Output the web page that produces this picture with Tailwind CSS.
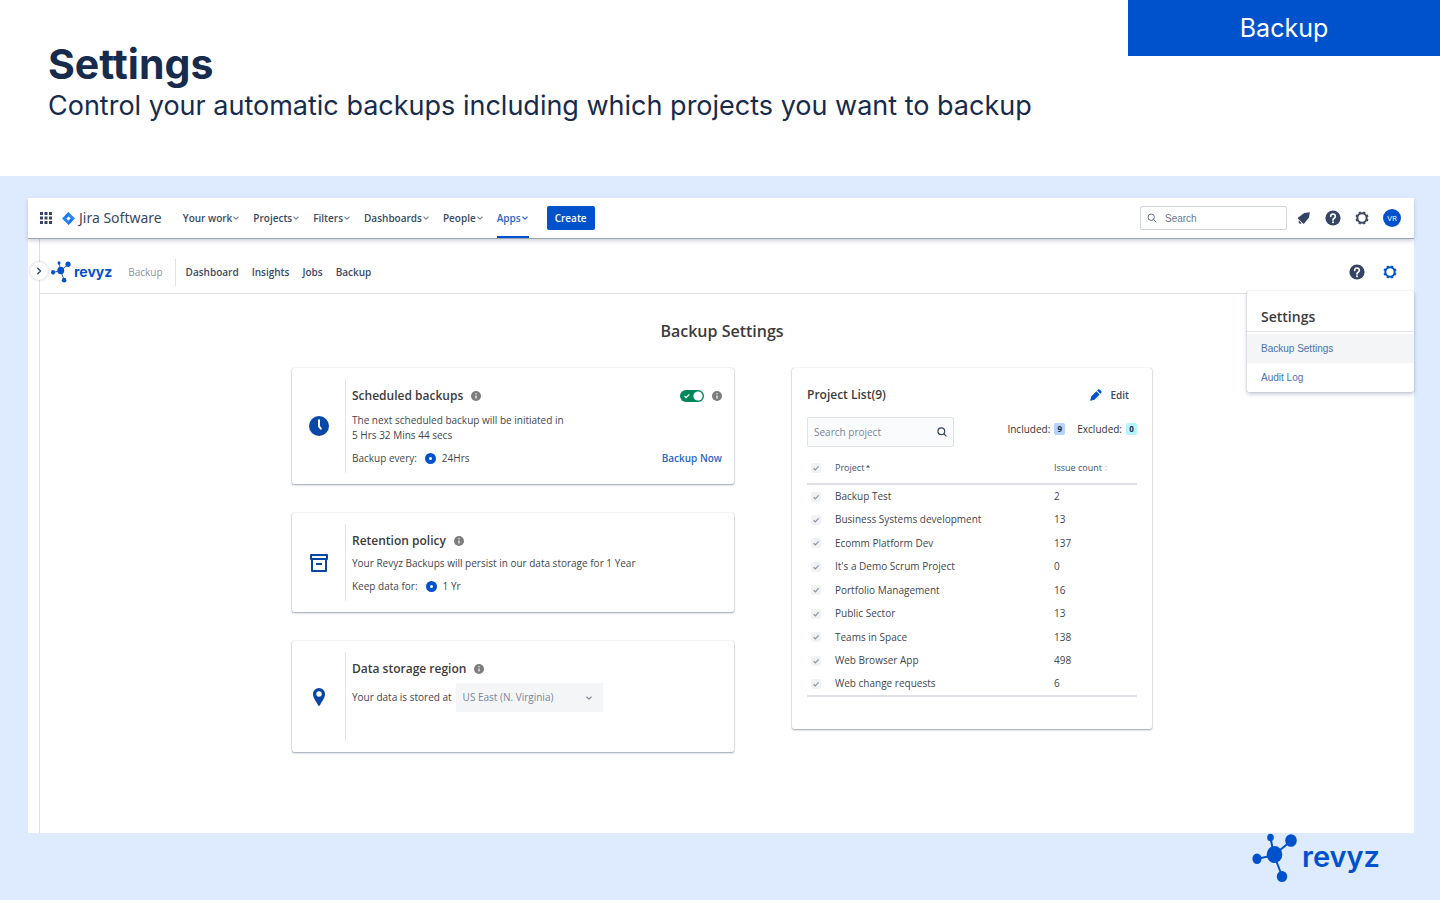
<!DOCTYPE html>
<html lang="en">
<head>
    <meta charset="UTF-8">
    <meta name="viewport" content="width=device-width, initial-scale=1.0">
    <title>Revyz - Backup Settings</title>
    <script src="https://cdn.jsdelivr.net/npm/@tailwindcss/browser@4"></script>
</head>
<body class="min-h-screen flex flex-col bg-white font-['Open_Sans',sans-serif] text-[10px] text-[#42464d]">
    <!-- Icons used more than once -->
    <svg class="hidden" aria-hidden="true">
        <symbol id="chevron" viewBox="0 0 8 8"><path d="M1.800 3 4 5.200l2.200-2.200" fill="none" stroke="currentColor" stroke-width="1.1" stroke-linecap="round" stroke-linejoin="round"/></symbol>
        <symbol id="info" viewBox="0 0 10 10"><circle cx="5" cy="5" r="5" fill="#7d7d7d"/><path d="M5 4.400v3" stroke="#fff" stroke-width="1.200"/><circle cx="5" cy="2.800" r=".7" fill="#fff"/></symbol>
        <symbol id="help" viewBox="0 0 16 16"><circle cx="8" cy="8" r="7.600" fill="#344563"/><path d="M5.700 6.300a2.300 2.300 0 1 1 3.500 2C8.300 8.800 8 9.200 8 10" fill="none" stroke="#fff" stroke-width="1.700" stroke-linecap="round"/><circle cx="8" cy="12.200" r="1" fill="#fff"/></symbol>
        <symbol id="gear" viewBox="0 0 16 16"><circle cx="8" cy="8" r="5.300" fill="none" stroke="currentColor" stroke-width="2.300"/><path d="M13 10.100l2 .8M10.100 13l.8 2M5.900 13l-.8 2M3 10.100l-2 .8M3 5.900l-2-.8M5.900 3l-.8-2M10.100 3l.8-2M13 5.900l2-.8" stroke="currentColor" stroke-width="2.600"/></symbol>
        <symbol id="molecule" viewBox="0 0 46 50"><path d="M22 22 18.500 5M22 22 39 8M22 22 5 26M22 22 30 43" stroke="#0052cc" stroke-width="2"/><g fill="#0052cc"><ellipse cx="22.500" cy="21.500" rx="7.800" ry="8.500"/><ellipse cx="18.500" cy="4.500" rx="3.300" ry="3.800"/><ellipse cx="39" cy="7.500" rx="5.800" ry="6.300"/><ellipse cx="5" cy="25.800" rx="4.600" ry="5.200"/><ellipse cx="30" cy="43.500" rx="5.200" ry="5.500"/></g></symbol>
        <symbol id="tick" viewBox="0 0 10 10"><path d="M2.600 5.200 4.300 6.800 7.600 3.400" fill="none" stroke="currentColor" stroke-width="1.200"/></symbol>
    </svg>

    <!-- Slide header -->
    <header class="h-44 shrink-0 flex justify-between items-start pl-12 text-[#172b4d] font-['Inter',sans-serif]">
        <div class="pt-10">
            <h1 class="text-[41px] leading-12 font-bold">Settings</h1>
            <p class="text-[27px] leading-9">Control your automatic backups including which projects you want to backup</p>
        </div>
        <div class="w-78 h-14 flex items-center justify-center bg-[#0052cc] text-white text-[25px] leading-9">Backup</div>
    </header>

    <section class="grow flex flex-col bg-[#deebff] pt-[22px] pl-7 pr-[26px]">
        <div class="grow flex flex-col bg-white">
            <!-- Jira top bar -->
            <header class="relative z-10 h-[41px] flex items-center pl-3 pr-[13px] bg-white border-b border-[#97a3b9] shadow-[0_2px_4px_rgba(9,30,66,0.2)] text-[#3b4963]">
                <button type="button" aria-label="Switch to">
                    <svg class="size-3" viewBox="0 0 12 12" fill="#344563"><path d="M0 0h3v3H0zM4.500 0h3v3h-3zM9 0h3v3H9zM0 4.500h3v3H0zM4.500 4.500h3v3h-3zM9 4.500h3v3H9zM0 9h3v3H0zM4.500 9h3v3h-3zM9 9h3v3H9z"/></svg>
                </button>
                <a href="#" class="ml-2.5 flex items-center gap-1 text-[14px] leading-5 font-['Noto_Sans',sans-serif]">
                    <svg class="size-[13px]" viewBox="0 0 14 14"><path d="M7 0l7 7-7 7-7-7z" fill="#2684ff"/><path d="M7 4.600 9.400 7 7 9.400 4.600 7z" fill="#fff"/><path d="M7 0v4.600L4.600 7 3 5.400C3 3 5 2 7 0zM7 14V9.400L9.400 7 11 8.600C11 11 9 12 7 14z" fill="#1868db" opacity=".5"/></svg>
                    Jira Software
                </a>
                <nav class="h-full ml-[21px] flex items-center gap-[13px] font-semibold">
                    <a href="#" class="flex items-center">Your work<svg class="size-2 text-[#7a869a]"><use href="#chevron"/></svg></a>
                    <a href="#" class="flex items-center">Projects<svg class="size-2 text-[#7a869a]"><use href="#chevron"/></svg></a>
                    <a href="#" class="flex items-center">Filters<svg class="size-2 text-[#7a869a]"><use href="#chevron"/></svg></a>
                    <a href="#" class="flex items-center">Dashboards<svg class="size-2 text-[#7a869a]"><use href="#chevron"/></svg></a>
                    <a href="#" class="flex items-center">People<svg class="size-2 text-[#7a869a]"><use href="#chevron"/></svg></a>
                    <a href="#" class="h-full flex items-center border-y-2 border-t-transparent border-b-[#0052cc] text-[#2a66c8]">Apps<svg class="size-2"><use href="#chevron"/></svg></a>
                </nav>
                <button type="button" class="ml-[18px] w-12 h-6 rounded-xs bg-[#0052cc] text-white font-semibold">Create</button>
                <label class="ml-auto w-[147px] h-6 flex items-center gap-2 px-1.5 border border-[#cfd3da] rounded-xs font-['Liberation_Sans',sans-serif]">
                    <svg class="size-2.5 shrink-0" viewBox="0 0 10 10" fill="none" stroke="#5e6c84"><circle cx="4.200" cy="4.200" r="3.200"/><path d="m6.600 6.600 2.700 2.700"/></svg>
                    <input type="search" placeholder="Search" aria-label="Search" class="min-w-0 w-full text-[10px] outline-none placeholder:text-[#6b778c]">
                </label>
                <div class="ml-2.5 flex items-center gap-3.5">
                    <button type="button" aria-label="Notifications"><svg class="size-3.5" viewBox="0 0 14 14" fill="#344563"><path d="M12.800 1.300 7.200 2 1.200 6.600q-.8.700.1 1.300l4.800 4.600q.8.600 1.300-.2L12 6.600z"/><path d="M1.800 9.500 4.600 12.200q-1.300 1-2.500.1-.9-1-.3-2.800z"/></svg></button>
                    <button type="button" aria-label="Help"><svg class="size-4"><use href="#help"/></svg></button>
                    <button type="button" aria-label="Settings"><svg class="size-3.5"><use href="#gear"/></svg></button>
                    <button type="button" class="size-[18px] rounded-full bg-[#0052cc] text-white text-[8px] leading-none">VR</button>
                </div>
            </header>

            <div class="relative grow flex">
                <!-- Collapsed sidebar -->
                <div class="w-3 shrink-0 border-r border-[#dcdfe4]"></div>
                <button type="button" aria-label="Expand sidebar" class="absolute z-10 left-0.5 top-[23px] size-[18px] flex items-center justify-center rounded-full bg-white shadow-[0_0_3px_rgba(9,30,66,0.25)] text-[#344563]">
                    <svg class="size-2.5 -rotate-90"><use href="#chevron"/></svg>
                </button>

                <div class="grow min-w-0">
                    <!-- Revyz app bar -->
                    <header class="h-[55px] flex items-center pt-3 pl-2.5 pr-[17px] border-b border-[#dfe1e6] text-[#3b4963] font-semibold">
                        <a href="#" class="flex items-center gap-0.5 text-[14px] leading-5 text-[#0052cc] font-['Inter',sans-serif] font-bold">
                            <svg class="w-[22px] h-[22px]"><use href="#molecule"/></svg>revyz
                        </a>
                        <span class="ml-4 pr-3 h-[27px] flex items-center border-r border-[#dfe1e6] font-normal text-[#8993a4]">Backup</span>
                        <nav class="ml-2.5 flex gap-[13px]">
                            <a href="#">Dashboard</a>
                            <a href="#">Insights</a>
                            <a href="#">Jobs</a>
                            <a href="#">Backup</a>
                        </nav>
                        <div class="ml-auto flex items-center gap-[18px]">
                            <button type="button" aria-label="Help"><svg class="size-4"><use href="#help"/></svg></button>
                            <button type="button" aria-label="Settings" class="text-[#0052cc]"><svg class="size-3.5"><use href="#gear"/></svg></button>
                        </div>
                    </header>

                    <main class="pt-[25px] pr-2.5">
                        <h2 class="text-center text-[16px] leading-6 font-semibold text-[#3c3c3c]">Backup Settings</h2>
                        <div class="mx-auto mt-[25px] w-full max-w-[860px] grid grid-cols-[442fr_360fr] gap-x-[58px] items-start">
                            <div class="flex flex-col gap-[29px]">
                                <!-- Scheduled backups -->
                                <section class="flex py-[11px] rounded-xs bg-white shadow-[0_1px_2px_rgba(9,30,66,0.4),0_0_1px_rgba(9,30,66,0.3)]">
                                    <div class="w-[54px] shrink-0 flex items-center justify-center border-r border-[#e4e6ea]">
                                        <svg class="size-5" viewBox="0 0 20 20"><circle cx="10" cy="10" r="10" fill="#0747a6"/><path d="M10 4.200v6.300l1.800 2.200" fill="none" stroke="#fff" stroke-width="2" stroke-linecap="round"/></svg>
                                    </div>
                                    <div class="grow pl-1.5 pr-3 py-[7px]">
                                        <div class="flex items-center h-5">
                                            <h3 class="text-[12px] leading-5 font-semibold text-[#3c3c3c]">Scheduled backups</h3>
                                            <svg class="ml-2 size-2.5"><use href="#info"/></svg>
                                            <label class="ml-auto grid items-center">
                                                <input type="checkbox" checked aria-label="Scheduled backups" class="col-start-1 row-start-1 appearance-none w-6 h-3 rounded-full bg-[#00875a]">
                                                <svg class="col-start-1 row-start-1 w-6 h-3 pointer-events-none" viewBox="0 0 24 12"><circle cx="18" cy="6" r="4.600" fill="#fff"/><path d="M4.500 6 6.200 7.600 9.300 4.400" fill="none" stroke="#fff" stroke-width="1.300"/></svg>
                                            </label>
                                            <svg class="ml-2 size-2.5"><use href="#info"/></svg>
                                        </div>
                                        <p class="mt-[7px] leading-[15px]">The next scheduled backup will be initiated in<br>5 Hrs 32 Mins 44 secs</p>
                                        <div class="mt-[7px] flex items-center h-4">
                                            <span>Backup every:</span>
                                            <label class="ml-2 flex items-center gap-1.5"><input type="radio" name="every" checked class="appearance-none size-[11px] rounded-full border-4 border-[#0052cc] bg-white">24Hrs</label>
                                            <button type="button" class="ml-auto font-semibold text-[#2a66c8]">Backup Now</button>
                                        </div>
                                    </div>
                                </section>

                                <!-- Retention policy -->
                                <section class="flex py-[11px] rounded-xs bg-white shadow-[0_1px_2px_rgba(9,30,66,0.4),0_0_1px_rgba(9,30,66,0.3)]">
                                    <div class="w-[54px] shrink-0 flex items-center justify-center border-r border-[#e4e6ea]">
                                        <svg class="size-[18px]" viewBox="0 0 18 18" fill="none" stroke="#0747a6" stroke-width="2" stroke-linejoin="round"><path d="M1 1h16v4H1zM2 5v12h14V5M6 10h6"/></svg>
                                    </div>
                                    <div class="grow pl-1.5 pr-3 py-[7px]">
                                        <div class="flex items-center h-5">
                                            <h3 class="text-[12px] leading-5 font-semibold text-[#3c3c3c]">Retention policy</h3>
                                            <svg class="ml-2 size-2.5"><use href="#info"/></svg>
                                        </div>
                                        <p class="mt-[5px] leading-[15px]">Your Revyz Backups will persist in our data storage for 1 Year</p>
                                        <div class="mt-[7px] flex items-center h-4">
                                            <span>Keep data for:</span>
                                            <label class="ml-2 flex items-center gap-1.5"><input type="radio" name="keep" checked class="appearance-none size-[11px] rounded-full border-4 border-[#0052cc] bg-white">1 Yr</label>
                                        </div>
                                    </div>
                                </section>

                                <!-- Data storage region -->
                                <section class="flex py-[11px] rounded-xs bg-white shadow-[0_1px_2px_rgba(9,30,66,0.4),0_0_1px_rgba(9,30,66,0.3)]">
                                    <div class="w-[54px] shrink-0 flex items-center justify-center border-r border-[#e4e6ea]">
                                        <svg class="w-3 h-[18px]" viewBox="0 0 12 18" fill="#0747a6" fill-rule="evenodd"><path d="M6 0a6 6 0 0 1 6 6.200C12 10 8.500 13.500 7 17.200q-1 1.300-2 0C3.500 13.500 0 10 0 6.200A6 6 0 0 1 6 0zm0 3.300a2.700 2.700 0 1 0 0 5.400 2.700 2.700 0 0 0 0-5.400z"/></svg>
                                    </div>
                                    <div class="grow pl-1.5 pr-3 pt-[7px] pb-[29px]">
                                        <div class="flex items-center h-5">
                                            <h3 class="text-[12px] leading-5 font-semibold text-[#3c3c3c]">Data storage region</h3>
                                            <svg class="ml-2 size-2.5"><use href="#info"/></svg>
                                        </div>
                                        <div class="mt-1 flex items-center gap-1">
                                            <label for="region">Your data is stored at</label>
                                            <div class="grid items-center">
                                                <select id="region" disabled class="col-start-1 row-start-1 appearance-none w-[147px] h-[29px] pl-[7px] bg-[#f4f5f7] text-[#7a8599] opacity-100">
                                                    <option>US East (N. Virginia)</option>
                                                </select>
                                                <svg class="col-start-1 row-start-1 justify-self-end mr-2.5 size-2 text-[#7a8599] pointer-events-none"><use href="#chevron"/></svg>
                                            </div>
                                        </div>
                                    </div>
                                </section>
                            </div>

                            <!-- Project list -->
                            <section class="px-[15px] pt-[17px] pb-8 rounded-xs bg-white shadow-[0_1px_2px_rgba(9,30,66,0.4),0_0_1px_rgba(9,30,66,0.3)]">
                                <div class="flex items-center justify-between h-5 pr-2">
                                    <h3 class="text-[12px] leading-5 font-semibold text-[#3c3c3c]">Project List(9)</h3>
                                    <button type="button" class="flex items-center gap-2 font-semibold text-[#3b4963]">
                                        <svg class="size-3" viewBox="0 0 12 12" fill="#0052cc"><path d="M8 .7q.9-.9 1.800 0l1.400 1.400q.9.9 0 1.800l-.9.900L7.100 1.600zM6.400 2.300 9.600 5.500 4.400 10.700.5 11.800q-.4 0-.3-.4L1.200 7.500z"/></svg>
                                        Edit
                                    </button>
                                </div>
                                <div class="mt-3 flex items-start justify-between">
                                    <label class="w-[147px] h-[30px] flex items-center px-1.5 border border-[#dfe1e6] rounded-xs bg-[#fafbfc]">
                                        <input type="search" placeholder="Search project" aria-label="Search project" class="min-w-0 w-full outline-none placeholder:text-[#7a8599]">
                                        <svg class="size-2.5 shrink-0" viewBox="0 0 10 10" fill="none" stroke="#344563" stroke-width="1.200"><circle cx="4.300" cy="4.300" r="3.400"/><path d="m6.700 6.700 2.700 2.700"/></svg>
                                    </label>
                                    <div class="mt-1 flex items-center gap-3 h-4 text-[#333]">
                                        <span class="flex items-center gap-1">Included: <b class="w-[11px] h-3 rounded-xs bg-[#b3d4ff] text-center text-[8px] leading-3 text-[#172b4d]">9</b></span>
                                        <span class="flex items-center gap-1">Excluded: <b class="w-[11px] h-3 rounded-xs bg-[#b3f5ff] text-center text-[8px] leading-3 text-[#172b4d]">0</b></span>
                                    </div>
                                </div>
                                <table class="mt-1.5 w-full border-b-2 border-[#dfe1e6] text-left">
                                    <thead class="h-[31px] border-b-2 border-[#dfe1e6] text-[9px] text-[#42526e]">
                                        <tr>
                                            <th class="w-7 pl-1">
                                                <label class="w-2.5 grid"><input type="checkbox" checked disabled aria-label="All projects" class="col-start-1 row-start-1 appearance-none size-2.5 rounded-xs bg-[#f1f2f4]"><svg class="col-start-1 row-start-1 size-2.5 text-[#8993a4]"><use href="#tick"/></svg></label>
                                            </th>
                                            <th class="font-normal">
                                                <span class="flex items-center gap-0.5">Project<svg class="w-1 h-2" viewBox="0 0 4 8"><path d="M0 3.500 2 1l2 2.500z" fill="#42526e"/><path d="M0 5h4L2 7z" fill="#dfe1e6"/></svg></span>
                                            </th>
                                            <th class="w-[83px] font-normal">
                                                <span class="flex items-center gap-0.5">Issue count<svg class="w-1 h-2" viewBox="0 0 4 8" fill="#dfe1e6"><path d="M0 3.500 2 1l2 2.500zM0 5h4L2 7z"/></svg></span>
                                            </th>
                                        </tr>
                                    </thead>
                                    <tbody id="projects"></tbody>
                                </table>
                            </section>
                        </div>
                    </main>
                </div>

                <!-- Settings menu -->
                <div class="absolute right-0 top-[52px] w-[167px] rounded-xs bg-white shadow-[0_2px_4px_rgba(9,30,66,0.25),0_0_1px_rgba(9,30,66,0.3)] font-['Liberation_Sans',sans-serif] text-[10px] text-[#4a73b5]">
                    <h3 class="h-[41px] pt-4 pl-3.5 border-b border-[#dfe1e6] font-['Open_Sans',sans-serif] text-[14px] leading-5 font-semibold text-[#3c3c3c]">Settings</h3>
                    <a href="#" class="mt-0.5 h-[29px] flex items-center pl-3.5 bg-[#f4f5f7]">Backup Settings</a>
                    <a href="#" class="h-[29px] flex items-center pl-3.5">Audit Log</a>
                </div>
            </div>
        </div>

        <footer class="h-[67px] shrink-0 flex items-start justify-end gap-1 pr-[34px] text-[#0052cc]">
            <svg class="w-[46px] h-[50px]"><use href="#molecule"/></svg>
            <span class="pt-1 text-[29px] leading-10 font-semibold font-['Inter',sans-serif]">revyz</span>
        </footer>
    </section>

    <script>
        const projects = [
            ['Backup Test', 2],
            ['Business Systems development', 13],
            ['Ecomm Platform Dev', 137],
            ["It's a Demo Scrum Project", 0],
            ['Portfolio Management', 16],
            ['Public Sector', 13],
            ['Teams in Space', 138],
            ['Web Browser App', 498],
            ['Web change requests', 6]
        ];

        document.getElementById('projects').innerHTML = projects.map(([name, count]) => `
            <tr class="odd:h-6 even:h-[23px]">
                <td class="pl-1"><label class="w-2.5 grid"><input type="checkbox" checked disabled aria-label="${name}" class="col-start-1 row-start-1 appearance-none size-2.5 rounded-xs bg-[#f1f2f4]"><svg class="col-start-1 row-start-1 size-2.5 text-[#8993a4]"><use href="#tick"/></svg></label></td>
                <td>${name}</td>
                <td>${count}</td>
            </tr>`).join('');
    </script>
</body>
</html>
